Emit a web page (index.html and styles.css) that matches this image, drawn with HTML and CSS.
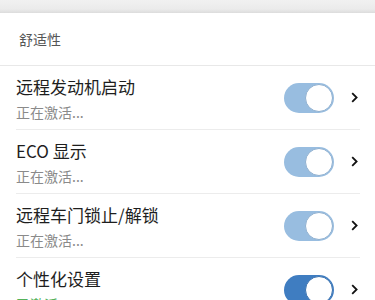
FILE: index.html
```html
<!DOCTYPE html>
<html lang="zh-CN">
<head>
<meta charset="UTF-8">
<meta name="viewport" content="width=device-width, initial-scale=1.0">
<title>舒适性</title>
<link rel="stylesheet" href="styles.css">
</head>
<body>

<div class="shade"></div>

<div class="card">
  <div class="section-title">舒适性</div>

  <div class="row">
    <div class="text">
      <div class="name">远程发动机启动</div>
      <div class="state">正在激活...</div>
    </div>
    <span class="toggle"></span>
    <svg class="chevron" width="7" height="11" viewBox="0 0 7 11"><path d="M1.2 1.2 L5.6 5.5 L1.2 9.8" fill="none" stroke="#111" stroke-width="1.8"/></svg>
  </div>

  <div class="row">
    <div class="text">
      <div class="name">ECO 显示</div>
      <div class="state">正在激活...</div>
    </div>
    <span class="toggle"></span>
    <svg class="chevron" width="7" height="11" viewBox="0 0 7 11"><path d="M1.2 1.2 L5.6 5.5 L1.2 9.8" fill="none" stroke="#111" stroke-width="1.8"/></svg>
  </div>

  <div class="row">
    <div class="text">
      <div class="name">远程车门锁止/解锁</div>
      <div class="state">正在激活...</div>
    </div>
    <span class="toggle"></span>
    <svg class="chevron" width="7" height="11" viewBox="0 0 7 11"><path d="M1.2 1.2 L5.6 5.5 L1.2 9.8" fill="none" stroke="#111" stroke-width="1.8"/></svg>
  </div>

  <div class="row">
    <div class="text">
      <div class="name">个性化设置</div>
      <div class="state active">已激活</div>
    </div>
    <span class="toggle on"></span>
    <svg class="chevron" width="7" height="11" viewBox="0 0 7 11"><path d="M1.2 1.2 L5.6 5.5 L1.2 9.8" fill="none" stroke="#111" stroke-width="1.8"/></svg>
  </div>
</div>

</body>
</html>
```

FILE: styles.css
```css
body {
  margin: 0;
  background: #fff;
  font-family: "Noto Sans CJK SC", "Noto Sans", sans-serif;
  color: #222;
}

.shade {
  height: 13px;
  background: linear-gradient(to bottom, #f1f1f1 0%, #ebebeb 70%, #dcdcdc 100%);
}

.card {
  background: #fff;
}

.section-title {
  height: 52px;
  line-height: 52px;
  padding-left: 19px;
  font-size: 14px;
  color: #555;
  border-bottom: 1px solid #e8e8e8;
}

.row {
  display: flex;
  align-items: center;
  height: 63px;
  margin: 0 15px 0 16px;
  border-bottom: 1px solid #ececec;
}

.text {
  flex: 1;
  align-self: stretch;
  padding-top: 9px;
}

.name {
  font-size: 17px;
  line-height: 24px;
  color: #1e1e1e;
}

.state {
  font-size: 14px;
  line-height: 20px;
  margin-top: 3px;
  color: #8a8a8a;
}

.state.active {
  color: #55b25a;
}

.toggle {
  position: relative;
  width: 50px;
  height: 30px;
  border-radius: 15px;
  background: #98bde0;
}

.toggle::after {
  content: "";
  position: absolute;
  top: 1px;
  right: 1px;
  width: 26px;
  height: 26px;
  border-radius: 50%;
  background: #fff;
  border: 1px solid #8fb0d0;
}

.toggle.on {
  background: #3f7dc1;
}

.toggle.on::after {
  border-color: #3a72b0;
}

.chevron {
  margin-left: 17px;
  margin-right: 2px;
}
```
